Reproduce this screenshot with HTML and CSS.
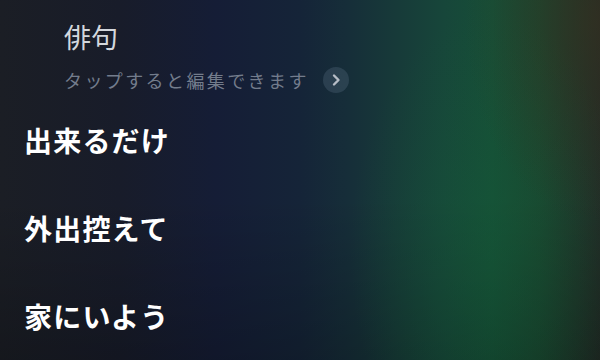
FILE: index.html
```html
<!DOCTYPE html>
<html lang="ja">
<head>
<meta charset="utf-8">
<link rel="stylesheet" href="styles.css">
</head>
<body>
<div class="screen">
  <div class="header">
    <div class="title">俳句</div>
    <div class="hint">
      <span class="hint-text">タップすると編集できます</span>
      <span class="chev">
        <svg width="26" height="26" viewBox="0 0 26 26"><path d="M11 8.5 L15.5 13 L11 17.5" fill="none" stroke="#b7bdc6" stroke-width="2.4" stroke-linecap="round" stroke-linejoin="round"/></svg>
      </span>
    </div>
  </div>
  <div class="lines">
    <div class="line">出来るだけ</div>
    <div class="line">外出控えて</div>
    <div class="line">家にいよう</div>
  </div>
</div>
</body>
</html>
```

FILE: styles.css
```css
html, body {
  margin: 0;
  padding: 0;
}
body {
  width: 600px;
  height: 360px;
  overflow: hidden;
  font-family: "Noto Sans CJK JP", "Noto Sans", sans-serif;
}
.screen {
  width: 600px;
  height: 360px;
  box-sizing: border-box;
  padding: 20px 0 0 24px;
  background:
    radial-gradient(ellipse 130px 200px at 595px 20px, rgba(60,50,30,0.5), rgba(60,50,30,0) 100%),
    radial-gradient(ellipse 140px 240px at 490px 250px, rgba(20,90,55,0.45), rgba(20,90,55,0) 100%),
    linear-gradient(to bottom, rgba(0,0,0,0) 55%, rgba(0,0,0,0.22) 100%),
    linear-gradient(to right, #1b1e25 0%, #181c2a 20%, #151d36 36%, #152438 50%, #162e39 58%, #173a39 66%, #17463a 74%, #164f37 82%, #1a452f 90%, #222b26 100%);
  display: flex;
  flex-direction: column;
}
.header {
  padding-left: 40px;
  display: flex;
  flex-direction: column;
}
.title {
  color: #d3d7dd;
  font-size: 27px;
  line-height: 34px;
  font-weight: 400;
}
.hint {
  margin-top: 13px;
  display: flex;
  align-items: center;
  gap: 14px;
}
.hint-text {
  color: #737c8c;
  font-size: 18px;
  letter-spacing: 2.4px;
  line-height: 26px;
}
.chev {
  width: 26px;
  height: 26px;
  border-radius: 50%;
  background: rgba(120,140,165,0.22);
  display: flex;
}
.lines {
  margin-top: 27px;
  display: flex;
  flex-direction: column;
  gap: 48px;
}
.line {
  color: #ffffff;
  font-size: 28px;
  font-weight: 700;
  line-height: 40px;
  letter-spacing: 1.2px;
}
```
